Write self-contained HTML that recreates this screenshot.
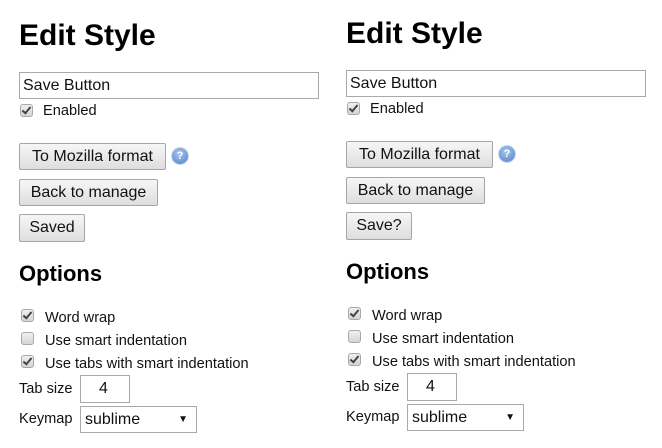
<!DOCTYPE html>
<html><head><meta charset="utf-8"><style>
body{margin:0;width:662px;height:448px;background:#fff;font-family:"Liberation Sans",Arial,sans-serif;color:#111;position:relative;overflow:hidden}
.p{position:absolute;top:0;width:330px;height:448px}
h1{position:absolute;margin:0;font-size:30px;line-height:30px;font-weight:bold;left:19px;top:21px;color:#000}
h2{position:absolute;margin:0;font-size:22px;line-height:22px;font-weight:bold;left:19px;top:263px;color:#000}
.inp{position:absolute;border:1px solid #a9a9a9;background:#fff;box-sizing:border-box;font-size:16px;line-height:25px;padding-left:3px}
.btn{position:absolute;box-sizing:border-box;border:1px solid #a6a6a6;border-radius:2px;background:linear-gradient(#f6f6f6,#dedede);font-size:16px;text-align:center;line-height:26px}
.cb{position:absolute;width:13px;height:13px;border:1px solid #a8a8a8;border-radius:3px;background:linear-gradient(#f0f0f0,#d4d4d4);box-sizing:border-box}
.cb.c::after{content:"";position:absolute;left:3px;top:0px;width:3px;height:7px;border:solid #444;border-width:0 2px 2px 0;transform:rotate(40deg)}
.lb{position:absolute;font-size:14.6px;line-height:16px;white-space:nowrap}
.help{position:absolute;width:16px;height:16px;border-radius:50%;background:radial-gradient(circle at 45% 35%,#a9c6ec,#4d7fc8);color:#fff;font-size:11px;font-weight:bold;text-align:center;line-height:16px;box-shadow:0 0 0 1px #c9d8ef}
</style></head><body>
<div class="p" style="left:0">
<h1>Edit Style</h1>
<div class="inp" style="left:19px;top:72px;width:300px;height:27px">Save Button</div>
<div class="cb c" style="left:20px;top:104px"></div><div class="lb" style="left:43px;top:103px">Enabled</div>
<div class="btn" style="left:19px;top:143px;width:147px;height:27px">To Mozilla format</div>
<div class="help" style="left:172px;top:148px">?</div>
<div class="btn" style="left:19px;top:179px;width:139px;height:27px">Back to manage</div>
<div class="btn" style="left:19px;top:214px;width:66px;height:28px">Saved</div>
<h2>Options</h2>
<div class="cb c" style="left:21px;top:309px"></div><div class="lb" style="left:45px;top:310px">Word wrap</div>
<div class="cb" style="left:21px;top:332px"></div><div class="lb" style="left:45px;top:333px">Use smart indentation</div>
<div class="cb c" style="left:21px;top:355px"></div><div class="lb" style="left:45px;top:356px">Use tabs with smart indentation</div>
<div class="lb" style="left:19px;top:381px">Tab size</div>
<div class="inp" style="left:80px;top:375px;width:50px;height:28px;padding-left:18px;line-height:26px">4</div>
<div class="lb" style="left:19px;top:411px">Keymap</div>
<div class="inp" style="left:80px;top:406px;width:117px;height:27px;line-height:25px;padding-left:4px">sublime<span style="position:absolute;right:8px;top:0;font-size:10px">&#9660;</span></div>
</div>
<div class="p" style="left:327px;top:-2px">
<h1>Edit Style</h1>
<div class="inp" style="left:19px;top:72px;width:300px;height:27px">Save Button</div>
<div class="cb c" style="left:20px;top:104px"></div><div class="lb" style="left:43px;top:103px">Enabled</div>
<div class="btn" style="left:19px;top:143px;width:147px;height:27px">To Mozilla format</div>
<div class="help" style="left:172px;top:148px">?</div>
<div class="btn" style="left:19px;top:179px;width:139px;height:27px">Back to manage</div>
<div class="btn" style="left:19px;top:214px;width:66px;height:28px">Save?</div>
<h2>Options</h2>
<div class="cb c" style="left:21px;top:309px"></div><div class="lb" style="left:45px;top:310px">Word wrap</div>
<div class="cb" style="left:21px;top:332px"></div><div class="lb" style="left:45px;top:333px">Use smart indentation</div>
<div class="cb c" style="left:21px;top:355px"></div><div class="lb" style="left:45px;top:356px">Use tabs with smart indentation</div>
<div class="lb" style="left:19px;top:381px">Tab size</div>
<div class="inp" style="left:80px;top:375px;width:50px;height:28px;padding-left:18px;line-height:26px">4</div>
<div class="lb" style="left:19px;top:411px">Keymap</div>
<div class="inp" style="left:80px;top:406px;width:117px;height:27px;line-height:25px;padding-left:4px">sublime<span style="position:absolute;right:8px;top:0;font-size:10px">&#9660;</span></div>
</div>
</body></html>
